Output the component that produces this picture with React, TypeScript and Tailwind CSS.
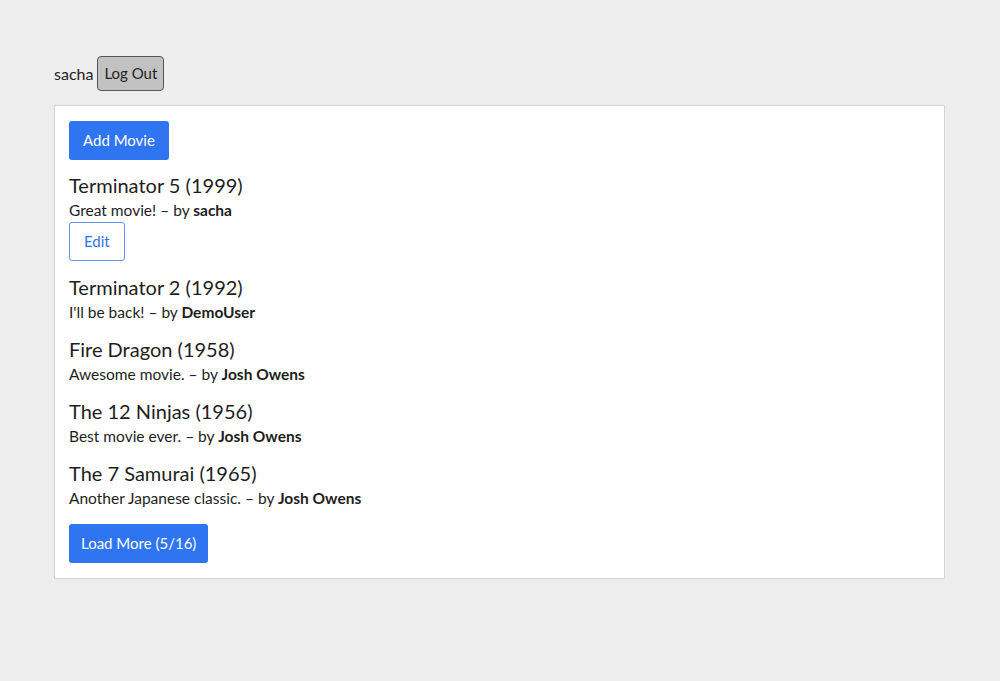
const movies = [
  { title: 'Terminator 5 (1999)', review: 'Great movie!', user: 'sacha', editable: true },
  { title: 'Terminator 2 (1992)', review: "I'll be back!", user: 'DemoUser' },
  { title: 'Fire Dragon (1958)', review: 'Awesome movie.', user: 'Josh Owens' },
  { title: 'The 12 Ninjas (1956)', review: 'Best movie ever.', user: 'Josh Owens' },
  { title: 'The 7 Samurai (1965)', review: 'Another Japanese classic.', user: 'Josh Owens' },
];

const blueBtn =
  'h-[39px] px-[14px] rounded-[3px] bg-[#2f74f0] text-white text-[15px] leading-none';

export default function App() {
  return (
    <div
      className="min-h-[681px] bg-[#ededed] pt-[56px] px-[54px] text-[#222]"
      style={{ fontFamily: 'Lato, "Open Sans", sans-serif' }}
    >
      {/* account bar */}
      <div className="flex items-center gap-[4px] h-[35px]">
        <span className="text-[16px]">sacha</span>
        <button className="h-[35px] px-[6px] rounded-[4px] border border-[#555] bg-[#c2c2c2] text-[15px] text-[#222]">
          Log Out
        </button>
      </div>

      {/* movie list */}
      <div className="mt-[14px] w-[891px] bg-white border border-[#d4d4d4] px-[14px] pt-[15px] pb-[15px]">
        <button className={blueBtn}>Add Movie</button>

        <div className="mt-[12px] flex flex-col gap-[12px]">
          {movies.map((m) => (
            <div key={m.title}>
              <h2 className="text-[20px] leading-[26px] text-[#1e1e1e]">{m.title}</h2>
              <p className="text-[15.5px] leading-[24px] text-[#1e1e1e]">
                {m.review} – by <b className="font-bold">{m.user}</b>
              </p>
              {m.editable && (
                <button className="mb-[1px] h-[39px] px-[14px] rounded-[3px] border border-[#5b95f3] bg-white text-[#2f74f0] text-[15px]">
                  Edit
                </button>
              )}
            </div>
          ))}
        </div>

        <button className={`${blueBtn} mt-[14px] !px-[12px]`}>Load More (5/16)</button>
      </div>
    </div>
  );
}
